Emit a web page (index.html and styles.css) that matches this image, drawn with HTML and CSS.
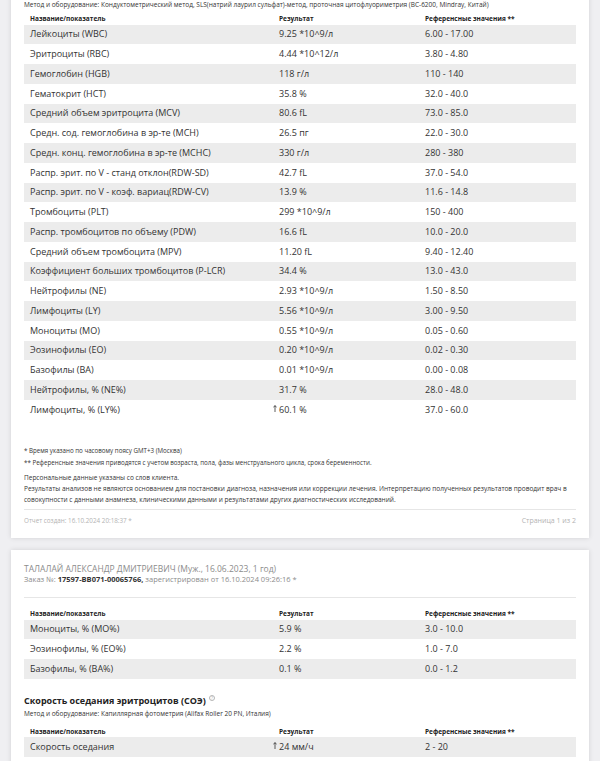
FILE: index.html
```html
<!DOCTYPE html>
<html lang="ru">
<head>
<meta charset="utf-8">
<title>Результаты анализов</title>
<link rel="stylesheet" href="styles.css">
</head>
<body>
<div class="page">
  <section class="card card-first">
    <p class="method">Метод и оборудование: Кондуктометрический метод, SLS(натрий лаурил сульфат)-метод, проточная цитофлуориметрия (BC-6200, Mindray, Китай)</p>
    <table class="results">
      <colgroup><col class="c-name"><col class="c-res"><col class="c-ref"></colgroup>
      <thead>
        <tr><th>Название/показатель</th><th>Результат</th><th>Референсные значения **</th></tr>
      </thead>
      <tbody>
        <tr><td>Лейкоциты (WBC)</td><td>9.25 *10^9/л</td><td>6.00 - 17.00</td></tr>
        <tr><td>Эритроциты (RBC)</td><td>4.44 *10^12/л</td><td>3.80 - 4.80</td></tr>
        <tr><td>Гемоглобин (HGB)</td><td>118 г/л</td><td>110 - 140</td></tr>
        <tr><td>Гематокрит (HCT)</td><td>35.8 %</td><td>32.0 - 40.0</td></tr>
        <tr><td>Средний объем эритроцита (MCV)</td><td>80.6 fL</td><td>73.0 - 85.0</td></tr>
        <tr><td>Средн. сод. гемоглобина в эр-те (MCH)</td><td>26.5 пг</td><td>22.0 - 30.0</td></tr>
        <tr><td>Средн. конц. гемоглобина в эр-те (MCHC)</td><td>330 г/л</td><td>280 - 380</td></tr>
        <tr><td>Распр. эрит. по V - станд отклон(RDW-SD)</td><td>42.7 fL</td><td>37.0 - 54.0</td></tr>
        <tr><td>Распр. эрит. по V - коэф. вариац(RDW-CV)</td><td>13.9 %</td><td>11.6 - 14.8</td></tr>
        <tr><td>Тромбоциты (PLT)</td><td>299 *10^9/л</td><td>150 - 400</td></tr>
        <tr><td>Распр. тромбоцитов по объему (PDW)</td><td>16.6 fL</td><td>10.0 - 20.0</td></tr>
        <tr><td>Средний объем тромбоцита (MPV)</td><td>11.20 fL</td><td>9.40 - 12.40</td></tr>
        <tr><td>Коэффициент больших тромбоцитов (P-LCR)</td><td>34.4 %</td><td>13.0 - 43.0</td></tr>
        <tr><td>Нейтрофилы (NE)</td><td>2.93 *10^9/л</td><td>1.50 - 8.50</td></tr>
        <tr><td>Лимфоциты (LY)</td><td>5.56 *10^9/л</td><td>3.00 - 9.50</td></tr>
        <tr><td>Моноциты (MO)</td><td>0.55 *10^9/л</td><td>0.05 - 0.60</td></tr>
        <tr><td>Эозинофилы (EO)</td><td>0.20 *10^9/л</td><td>0.02 - 0.30</td></tr>
        <tr><td>Базофилы (BA)</td><td>0.01 *10^9/л</td><td>0.00 - 0.08</td></tr>
        <tr><td>Нейтрофилы, % (NE%)</td><td>31.7 %</td><td>28.0 - 48.0</td></tr>
        <tr><td>Лимфоциты, % (LY%)</td><td><svg class="up" viewBox="0 0 4 7" width="4" height="7"><path d="M2 0.6V7M0.4 2.4L2 0.6L3.6 2.4" fill="none" stroke="#333" stroke-width="0.8"/></svg>60.1 %</td><td>37.0 - 60.0</td></tr>
      </tbody>
    </table>

    <div class="notes">
      <p>* Время указано по часовому поясу GMT+3 (Москва)</p>
      <p>** Референсные значения приводятся с учетом возраста, пола, фазы менструального цикла, срока беременности.</p>
    </div>
    <div class="disclaimer">
      <p>Персональные данные указаны со слов клиента.</p>
      <p>Результаты анализов не являются основанием для постановки диагноза, назначения или коррекции лечения. Интерпретацию полученных результатов проводит врач в совокупности с данными анамнеза, клиническими данными и результатами других диагностических исследований.</p>
    </div>
    <div class="card-footer">
      <span class="created">Отчет создан: 16.10.2024 20:18:37 *</span>
      <span class="pageno">Страница 1 из 2</span>
    </div>
  </section>

  <section class="card card-second">
    <div class="patient">
      <p class="pname">ТАЛАЛАЙ АЛЕКСАНДР ДМИТРИЕВИЧ (Муж., 16.06.2023, 1 год)</p>
      <p class="order">Заказ №: <b>17597-BB071-00065766,</b> зарегистрирован от 16.10.2024 09:26:16 *</p>
    </div>
    <table class="results">
      <colgroup><col class="c-name"><col class="c-res"><col class="c-ref"></colgroup>
      <thead>
        <tr><th>Название/показатель</th><th>Результат</th><th>Референсные значения **</th></tr>
      </thead>
      <tbody>
        <tr><td>Моноциты, % (MO%)</td><td>5.9 %</td><td>3.0 - 10.0</td></tr>
        <tr><td>Эозинофилы, % (EO%)</td><td>2.2 %</td><td>1.0 - 7.0</td></tr>
        <tr><td>Базофилы, % (BA%)</td><td>0.1 %</td><td>0.0 - 1.2</td></tr>
      </tbody>
    </table>

    <h2 class="test-title">Скорость оседания эритроцитов (СОЭ)<span class="help">?</span></h2>
    <p class="method method-esr">Метод и оборудование: Капиллярная фотометрия (Alifax Roller 20 PN, Италия)</p>
    <table class="results results-esr">
      <colgroup><col class="c-name"><col class="c-res"><col class="c-ref"></colgroup>
      <thead>
        <tr><th>Название/показатель</th><th>Результат</th><th>Референсные значения **</th></tr>
      </thead>
      <tbody>
        <tr><td>Скорость оседания</td><td><svg class="up" viewBox="0 0 4 7" width="4" height="7"><path d="M2 0.6V7M0.4 2.4L2 0.6L3.6 2.4" fill="none" stroke="#333" stroke-width="0.8"/></svg>24 мм/ч</td><td>2 - 20</td></tr>
      </tbody>
    </table>
  </section>
</div>
</body>
</html>
```

FILE: styles.css
```css
* { box-sizing: border-box; }
html, body {
  margin: 0;
  padding: 0;
  background: #efeff2;
  font-family: "Open Sans", "Noto Sans", sans-serif;
  color: #333;
  overflow: hidden;
}
p { margin: 0; }

.page {
  display: flex;
  flex-direction: column;
  gap: 12.5px;
  padding: 0 11px;
}

.card {
  background: #fff;
  box-shadow: 0 0 5px rgba(0, 0, 0, 0.12);
  padding: 0 13px 12px;
}
.card-first {
  margin-top: -10px;
  padding-top: 10px;
}
.card-second {
  padding-top: 13px;
  padding-bottom: 40px;
}

.method {
  font-size: 6.5px;
  line-height: 9px;
  color: #333;
}

.results {
  width: 100%;
  border-collapse: collapse;
  table-layout: fixed;
}
.results .c-name { width: 249px; }
.results .c-res { width: 146px; }
.results th {
  text-align: left;
  font-size: 6.5px;
  font-weight: 700;
  line-height: 9.5px;
  padding: 5px 6px 1px;
  color: #222;
}
.results td {
  font-size: 9px;
  height: 19.75px;
  line-height: 12px;
  padding: 0 6px;
  vertical-align: middle;
  white-space: nowrap;
}
.results tbody tr:nth-child(odd) td { background: #ececec; }

.card-second .results th { padding-top: 11px; }
.card-second .results-esr th { padding-top: 8.75px; }

.up {
  display: inline-block;
  vertical-align: 1px;
  margin-left: -6px;
  margin-right: 2px;
}

.notes {
  margin-top: 25.5px;
  font-size: 6.2px;
  line-height: 12px;
}
.disclaimer {
  margin-top: 3px;
  font-size: 6.5px;
  line-height: 11px;
  padding-bottom: 4px;
  border-bottom: 1px solid #e6e6e6;
}
.card-footer {
  display: flex;
  justify-content: space-between;
  align-items: center;
  padding-top: 4.5px;
  line-height: 11px;
  color: #b3b3b3;
}
.created { font-size: 6.3px; }
.pageno { font-size: 7px; }

.patient {
  padding-bottom: 12px;
  border-bottom: 1px solid #e6e6e6;
  color: #8c8c8c;
}
.pname { font-size: 8.5px; line-height: 11px; }
.order { font-size: 7.5px; line-height: 11px; }
.order b { color: #333; font-weight: 700; }

.test-title {
  margin: 15.75px 0 0;
  font-size: 9px;
  line-height: 12px;
  font-weight: 700;
  color: #222;
}
.help {
  display: inline-block;
  width: 6px;
  height: 6px;
  margin-left: 3px;
  border: 0.7px solid #b5b5b5;
  border-radius: 50%;
  color: #b5b5b5;
  font-size: 4.5px;
  line-height: 5px;
  text-align: center;
  vertical-align: 4px;
  font-weight: 400;
}
.method-esr { margin-top: 2.5px; }
```
